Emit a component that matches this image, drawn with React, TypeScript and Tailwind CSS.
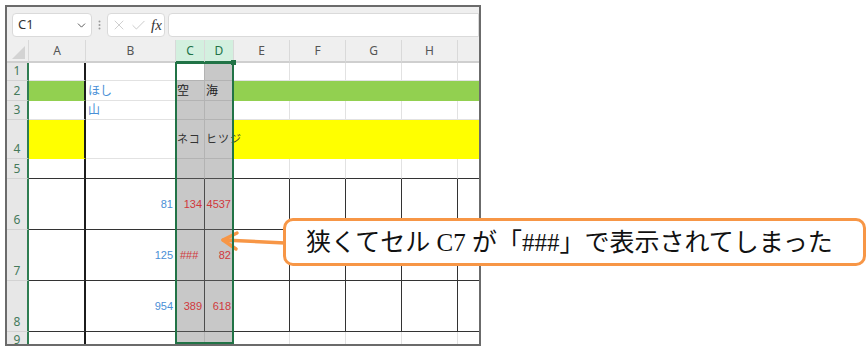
import { Check, ChevronDown, X } from 'lucide-react';

// 列定義（幅は右罫線込み）
type Col = { key: string; w: string; label: string };

const COLS: Col[] = [
  { key: 'A', w: 'w-[57px]', label: 'A' },
  { key: 'B', w: 'w-[90px]', label: 'B' },
  { key: 'C', w: 'w-[29px]', label: 'C' },
  { key: 'D', w: 'w-[29px]', label: 'D' },
  { key: 'E', w: 'w-[56px]', label: 'E' },
  { key: 'F', w: 'w-[56px]', label: 'F' },
  { key: 'G', w: 'w-[56px]', label: 'G' },
  { key: 'H', w: 'w-[56px]', label: 'H' },
  { key: 'I', w: 'flex-1', label: '' },
];

const ROW_H: Record<number, string> = {
  1: 'h-[18px]',
  2: 'h-[20px]',
  3: 'h-[19px]',
  4: 'h-[39px]',
  5: 'h-[20px]',
  6: 'h-[51px]',
  7: 'h-[51px]',
  8: 'h-[51px]',
  9: 'h-[14px]',
};

type Kind = 'blueL' | 'blueR' | 'redR' | 'redL' | 'ink' | 'kana';

const CELLS: Record<string, { text: string; kind: Kind }> = {
  B2: { text: 'ほし', kind: 'blueL' },
  B3: { text: '山', kind: 'blueL' },
  C2: { text: '空', kind: 'ink' },
  D2: { text: '海', kind: 'ink' },
  C4: { text: 'ネコ', kind: 'kana' },
  D4: { text: 'ヒツジ', kind: 'kana' },
  B6: { text: '81', kind: 'blueR' },
  C6: { text: '134', kind: 'redR' },
  D6: { text: '4537', kind: 'redR' },
  B7: { text: '125', kind: 'blueR' },
  C7: { text: '###', kind: 'redL' },
  D7: { text: '82', kind: 'redR' },
  B8: { text: '954', kind: 'blueR' },
  C8: { text: '389', kind: 'redR' },
  D8: { text: '618', kind: 'redR' },
};

const KIND_CLASS: Record<Kind, string> = {
  blueL: 'justify-start pl-[2px] text-[12px] text-[#4a8fd6]',
  blueR: 'justify-end pr-[2px] text-[11px] text-[#4a8fd6]',
  redR: 'justify-end pr-[2px] text-[11px] text-[#d0393c]',
  redL: 'justify-start pl-[4px] text-[11px] text-[#d0393c]',
  ink: 'justify-start pl-[1px] text-[12px] text-[#222222]',
  kana: 'justify-start pl-[1px] text-[11px] text-[#333333] tracking-[1px]',
};

function cellClass(r: number, ci: number) {
  const sel = ci === 2 || ci === 3;
  const green = r === 2 && !sel && ci !== 1;
  const yellow = r === 4 && !sel && ci !== 1;
  const darkRow = r >= 6 && r <= 8;

  let bg = 'bg-white';
  if (sel) bg = r === 1 && ci === 2 ? 'bg-white' : 'bg-[#c8c8c8]';
  else if (green) bg = 'bg-[#92d050]';
  else if (yellow) bg = 'bg-[#ffff00]';

  let right = 'border-r border-r-[#e2e2e2]';
  if (ci === 0) right = 'border-r-2 border-r-[#1c1c1c]';
  else if (ci === 8) right = '';
  else if (sel) right = darkRow ? 'border-r border-r-[#4d4d4d]' : 'border-r border-r-[#b3b3b3]';
  else if (darkRow) right = 'border-r border-r-[#333333]';
  else if (green) right = 'border-r border-r-[#92d050]';
  else if (yellow) right = 'border-r border-r-[#ffff00]';

  let bottom = 'border-b border-b-[#e2e2e2]';
  if (r === 9) bottom = '';
  else if (r >= 5) bottom = sel ? 'border-b border-b-[#4d4d4d]' : 'border-b border-b-[#333333]';
  else if (sel) bottom = 'border-b border-b-[#b3b3b3]';
  else if (green) bottom = 'border-b border-b-[#92d050]';
  else if (yellow) bottom = 'border-b border-b-[#ffff00]';

  return `${bg} ${right} ${bottom}`;
}

function FormulaBar() {
  return (
    <div className="h-[33px] shrink-0 bg-[#efefef] flex items-start pt-[6px] pl-[5px]">
      <div className="w-[80px] h-[24px] bg-white border border-[#dadada] rounded-[4px] flex items-center justify-between pl-[5px] pr-[3px]">
        <span className="text-[13px] text-[#333333] font-['Noto_Sans',sans-serif]">C1</span>
        <ChevronDown size={13} strokeWidth={1.6} color="#444444" />
      </div>
      <div className="w-[15px] h-[24px] flex items-center justify-center">
        <svg width="3" height="10" viewBox="0 0 3 10">
          <circle cx="1.5" cy="1.5" r="1" fill="#9a9a9a" />
          <circle cx="1.5" cy="5" r="1" fill="#9a9a9a" />
          <circle cx="1.5" cy="8.5" r="1" fill="#9a9a9a" />
        </svg>
      </div>
      <div className="w-[58px] h-[24px] bg-white border border-[#dadada] rounded-[4px] flex items-center pl-[3px]">
        <X size={16} strokeWidth={1.1} color="#bdbdbd" />
        <Check size={17} strokeWidth={1.1} color="#bdbdbd" className="ml-[3px]" />
        <span className="ml-[4px] italic text-[15px] leading-none text-[#333333] font-['Liberation_Serif',serif]">
          fx
        </span>
      </div>
      <div className="ml-[3px] flex-1 h-[24px] bg-white border border-[#dadada] rounded-l-[4px]" />
    </div>
  );
}

function HeaderRow() {
  return (
    <div className="flex h-[23px] shrink-0">
      <div className="w-[22px] shrink-0 bg-[#efefef] border-r border-r-[#d9d9d9] border-b-2 border-b-[#cfcfcf] relative">
        <svg className="absolute left-[5px] top-[6px]" width="14" height="14" viewBox="0 0 14 14">
          <polygon points="13,0 13,13 0,13" fill="#d3d3d3" />
        </svg>
      </div>
      {COLS.map((c, ci) => {
        const sel = ci === 2 || ci === 3;
        return (
          <div
            key={c.key}
            className={`${c.w} shrink-0 flex items-center justify-center text-[12px] font-['Noto_Sans',sans-serif] ${
              ci === 8 ? '' : 'border-r border-r-[#d9d9d9]'
            } ${
              sel
                ? 'bg-[#d3f0df] text-[#217346] border-b-2 border-b-[#217346]'
                : 'bg-[#efefef] text-[#555555] border-b-2 border-b-[#cfcfcf]'
            }`}
          >
            {c.label}
          </div>
        );
      })}
    </div>
  );
}

function GridRow({ r }: { r: number }) {
  return (
    <div className={`flex shrink-0 ${ROW_H[r]}`}>
      <div
        className={`w-[22px] shrink-0 bg-[#e7e7e7] border-r-2 border-r-[#2f7d52] border-b border-b-[#d3d3d3] flex justify-center text-[12px] leading-[16px] text-[#457a5b] font-['Noto_Sans',sans-serif] ${
          r === 9 ? 'items-start' : 'items-end pb-[1px]'
        }`}
      >
        {r}
      </div>
      {COLS.map((c, ci) => {
        const cell = CELLS[`${c.key}${r}`];
        return (
          <div
            key={c.key}
            className={`${c.w} shrink-0 flex items-center ${cellClass(r, ci)} ${
              cell ? KIND_CLASS[cell.kind] : ''
            } font-['Liberation_Sans','Noto_Sans_CJK_JP',sans-serif]`}
          >
            {cell && <span className="relative z-10 whitespace-nowrap">{cell.text}</span>}
          </div>
        );
      })}
    </div>
  );
}

export default function App() {
  return (
    <div className="relative w-[867px] h-[350px] bg-white overflow-hidden">
      <div className="pt-[5px] pl-[5px]">
        <div className="relative w-[476px] h-[341px] border-2 border-[#6b6b6b] overflow-hidden flex flex-col">
          <FormulaBar />
          <HeaderRow />
          {[1, 2, 3, 4, 5, 6, 7, 8, 9].map((r) => (
            <GridRow key={r} r={r} />
          ))}

          {/* 選択範囲 C:D */}
          <div className="absolute left-[168px] top-[55px] w-[59px] bottom-0 border-2 border-[#217346] pointer-events-none z-20">
            <div className="absolute -right-[4px] -top-[4px] w-[5px] h-[5px] bg-[#217346]" />
          </div>
        </div>
      </div>

      {/* 矢印 */}
      <svg className="absolute left-0 top-0 pointer-events-none" width="867" height="350" viewBox="0 0 867 350">
        <g stroke="#f79646" strokeWidth="3.5" strokeLinecap="round" strokeLinejoin="round" fill="none">
          <path d="M285 243 L223 240" />
          <path d="M237 233 L223 240 L236 249" />
        </g>
      </svg>

      {/* 吹き出し */}
      <div className="absolute left-[283px] top-[218px] w-[583px] h-[48px] bg-white border-[3px] border-[#f79646] rounded-[10px] flex items-center pl-[20px]">
        <span className="text-[25px] leading-none text-[#111111] whitespace-nowrap font-['Liberation_Serif','Noto_Sans_CJK_JP',serif]">
          狭くてセル C7 が「###」で表示されてしまった
        </span>
      </div>
    </div>
  );
}
